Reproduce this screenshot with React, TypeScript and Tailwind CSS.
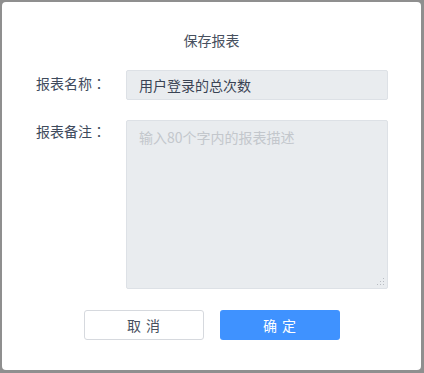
import React from "react";

export default function App() {
  const font = { fontFamily: '"Noto Sans CJK SC", "Noto Sans", sans-serif' };
  const colon = (
    <span style={{ fontFamily: '"Noto Sans CJK TC", "Noto Sans CJK SC", sans-serif' }}>：</span>
  );
  return (
    <div
      className="w-[424px] h-[373px] bg-[#8f8f8f] pt-[2px] pl-[2px] pr-[3px] pb-[3px]"
      style={font}
    >
      <div className="bg-white rounded-[4px] h-full flex flex-col">
        <div className="pt-[28px] text-center text-[14px] leading-[20px] text-[#47505e]">
          保存报表
        </div>
        <div className="mt-[20px] flex items-start">
          <div className="w-[124px] pl-[34px] pt-[3px] text-[14px] leading-[20px] text-[#3e4a5c]">
            报表名称{colon}
          </div>
          <input
            readOnly
            defaultValue="用户登录的总次数"
            className="w-[262px] h-[30px] bg-[#e9ecef] border border-[#dde1e6] rounded-[2px] px-[12px] text-[14px] leading-[20px] text-[#3a4354] outline-none"
          />
        </div>
        <div className="mt-[20px] flex items-start">
          <div className="w-[124px] pl-[34px] pt-[1px] text-[14px] leading-[20px] text-[#3e4a5c]">
            报表备注{colon}
          </div>
          <div className="relative w-[262px] h-[169px]">
            <textarea
              placeholder="输入80个字内的报表描述"
              className="w-full h-full resize-none bg-[#e9ecef] border border-[#dde1e6] rounded-[2px] px-[12px] pt-[6px] text-[14px] leading-[20px] text-[#3a4354] placeholder:text-[#c3c7cc] outline-none"
            />
            <svg
              className="absolute right-[3px] bottom-[3px]"
              width="8"
              height="8"
              viewBox="0 0 8 8"
            >
              <rect x="6" y="0" width="1" height="1" fill="#b8bcc2" />
              <rect x="6" y="3" width="1" height="1" fill="#b8bcc2" />
              <rect x="3" y="3" width="1" height="1" fill="#b8bcc2" />
              <rect x="6" y="6" width="1" height="1" fill="#b8bcc2" />
              <rect x="3" y="6" width="1" height="1" fill="#b8bcc2" />
              <rect x="0" y="6" width="1" height="1" fill="#b8bcc2" />
            </svg>
          </div>
        </div>
        <div className="mt-[21px] flex justify-center gap-[16px]">
          <button className="w-[120px] h-[30px] border border-[#d6d9de] rounded-[3px] bg-white text-[14px] leading-[20px] text-[#47505e] flex items-center justify-center gap-[5px]">
            <span>取</span>
            <span>消</span>
          </button>
          <button className="w-[120px] h-[30px] rounded-[3px] bg-[#3f92ff] text-[14px] leading-[20px] text-white flex items-center justify-center gap-[5px]">
            <span>确</span>
            <span>定</span>
          </button>
        </div>
      </div>
    </div>
  );
}
